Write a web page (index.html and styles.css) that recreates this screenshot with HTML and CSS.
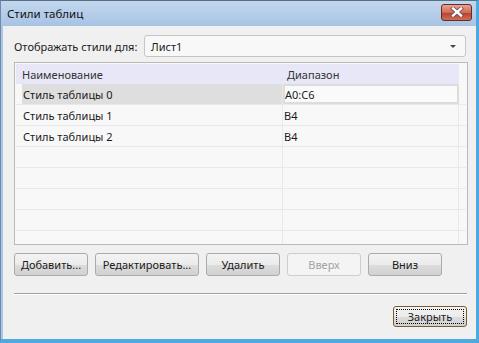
FILE: index.html
```html
<!DOCTYPE html>
<html lang="ru">
<head>
    <meta charset="UTF-8">
    <title>Стили таблиц</title>
    <link rel="stylesheet" href="styles.css">
</head>
<body>
    <div class="window">
        <div class="titlebar">
            <span class="title">Стили таблиц</span>
            <button class="close-btn" aria-label="Закрыть">
                <svg width="14" height="10" viewBox="0 0 14 10">
                    <path d="M3 1.5 L11 8.5 M11 1.5 L3 8.5" stroke="#6b4a4a" stroke-width="4" stroke-linecap="square"/>
                    <path d="M3 1.5 L11 8.5 M11 1.5 L3 8.5" stroke="#fff" stroke-width="2.4" stroke-linecap="square"/>
                </svg>
            </button>
        </div>

        <div class="client">
            <!-- Sheet selector -->
            <div class="field-row">
                <label class="field-label">Отображать стили для:</label>
                <div class="combo">
                    <span>Лист1</span>
                    <span class="combo-arrow"></span>
                </div>
            </div>

            <!-- Styles list -->
            <div class="table">
                <div class="row header">
                    <div class="cell name-head">Наименование</div>
                    <div class="cell range-head">Диапазон</div>
                </div>
                <div class="row selected">
                    <div class="gutter"></div>
                    <div class="cell name">Стиль таблицы 0</div>
                    <div class="cell range editing">A0:C6</div>
                    <div class="tail"></div>
                </div>
                <div class="row">
                    <div class="gutter"></div>
                    <div class="cell name">Стиль таблицы 1</div>
                    <div class="cell range">B4</div>
                    <div class="tail"></div>
                </div>
                <div class="row">
                    <div class="gutter"></div>
                    <div class="cell name">Стиль таблицы 2</div>
                    <div class="cell range">B4</div>
                    <div class="tail"></div>
                </div>
                <div class="row"><div class="gutter"></div><div class="cell name"></div><div class="cell range"></div><div class="tail"></div></div>
                <div class="row"><div class="gutter"></div><div class="cell name"></div><div class="cell range"></div><div class="tail"></div></div>
                <div class="row"><div class="gutter"></div><div class="cell name"></div><div class="cell range"></div><div class="tail"></div></div>
                <div class="row"><div class="gutter"></div><div class="cell name"></div><div class="cell range"></div><div class="tail"></div></div>
                <div class="row last"><div class="gutter"></div><div class="cell name"></div><div class="cell range"></div><div class="tail"></div></div>
            </div>

            <div class="actions">
                <button class="btn">Добавить...</button>
                <button class="btn wide">Редактировать...</button>
                <button class="btn">Удалить</button>
                <button class="btn" disabled>Вверх</button>
                <button class="btn">Вниз</button>
            </div>

            <div class="separator"></div>

            <div class="footer">
                <button class="btn default"><span class="focus">Закрыть</span></button>
            </div>
        </div>
    </div>
</body>
</html>
```

FILE: styles.css
```css
:root {
    --client-bg: #f0f0f0;
    --text-color: #1a1a1a;
    --frame-color: #a9c6e6;
    --grid-line: #e9e9e9;
    --header-bg: #e7e7f7;
}

body {
    margin: 0;
    font-family: "Noto Sans", "Open Sans", sans-serif;
    font-size: 11px;
    color: var(--text-color);
}

.window {
    width: 479px;
    height: 343px;
    box-sizing: border-box;
    display: flex;
    flex-direction: column;
    background: var(--frame-color);
    border-left: 1px solid #6f8aa8;
    border-right: 3px solid #4ea9e0;
    border-bottom: 4px solid #4ea9e0;
    border-top: 1px solid #5a6f88;
}

.titlebar {
    height: 25px;
    display: flex;
    align-items: center;
    justify-content: space-between;
    padding: 0 4px 0 6px;
    background: linear-gradient(#c3d8ee, #a7c3e3);
}

.title {
    font-size: 11.5px;
    color: #111;
}

.close-btn {
    width: 31px;
    height: 17px;
    margin-top: -3px;
    padding: 0;
    display: flex;
    align-items: center;
    justify-content: center;
    border: 1px solid #6a2a2a;
    border-radius: 3px;
    background: linear-gradient(#e8a393, #d16a55 50%, #b8402a 51%, #d06e55);
}

.client {
    flex: 1;
    margin-left: 2px;
    padding: 9px 10px 0 11px;
    background: var(--client-bg);
    display: flex;
    flex-direction: column;
}

.field-row {
    display: flex;
    align-items: center;
    height: 22px;
}

.field-label {
    width: 130px;
    white-space: nowrap;
}

.combo {
    flex: 1;
    height: 20px;
    display: flex;
    align-items: center;
    justify-content: space-between;
    padding: 0 9px 0 6px;
    border: 1px solid #c6c6c6;
    border-radius: 3px;
    background: #f8f8f8;
}

.combo-arrow {
    width: 0;
    height: 0;
    border-left: 3px solid transparent;
    border-right: 3px solid transparent;
    border-top: 3px solid #444;
}

.table {
    margin-top: 5px;
    height: 183px;
    box-sizing: border-box;
    padding: 1px 1px 0 1px;
    border: 1px solid #b9b9b9;
    background: #f8f8f8;
    overflow: hidden;
    margin-right: -2px;
}

.row {
    display: flex;
    height: 21px;
    border-bottom: 1px solid var(--grid-line);
    box-sizing: border-box;
}

.row.header {
    height: 20px;
    border-bottom: none;
}

.cell {
    display: flex;
    align-items: center;
    box-sizing: border-box;
    white-space: nowrap;
}

.name-head {
    width: 267px;
    padding-left: 6px;
    background: var(--header-bg);
    color: #333;
}

.range-head {
    width: 176px;
    padding-left: 4px;
    background: var(--header-bg);
    color: #333;
}

.gutter {
    width: 6px;
}

.name {
    width: 261px;
    padding-left: 1px;
    border-right: 1px solid var(--grid-line);
}

.range {
    width: 176px;
    padding-left: 1px;
    border-right: 1px solid var(--grid-line);
}

.tail {
    flex: 1;
}

.selected .name {
    background: #dedede;
}

.range.editing {
    border: 2px solid #dcdcdc;
    background: #fafafa;
    padding-left: 0;
}

.actions {
    display: flex;
    gap: 7px;
    margin-top: 8px;
}

.btn {
    width: 74px;
    height: 23px;
    padding: 0;
    font-family: inherit;
    font-size: 11px;
    color: var(--text-color);
    border: 1px solid #ababab;
    border-radius: 3px;
    background: linear-gradient(#f3f3f3, #ebebeb 50%, #dddddd 51%, #d1d1d1);
}

.btn.wide {
    width: 104px;
}

.btn:disabled {
    color: #a3a3a3;
    border-color: #cdcdcd;
    background: #f4f4f4;
}

.separator {
    margin-top: 17px;
    margin-right: -1px;
    height: 1px;
    background: #a0a0a0;
    border-bottom: 1px solid #fff;
}

.footer {
    display: flex;
    justify-content: flex-end;
    margin-top: 11px;
}

.btn.default {
    width: 74px;
    height: 21px;
    border-color: #7a5b30;
    padding: 2px;
    margin-right: -1px;
}

.focus {
    display: flex;
    align-items: center;
    justify-content: center;
    height: 100%;
    box-sizing: border-box;
    border: 1px dotted #000;
    border-radius: 1px;
}
```
